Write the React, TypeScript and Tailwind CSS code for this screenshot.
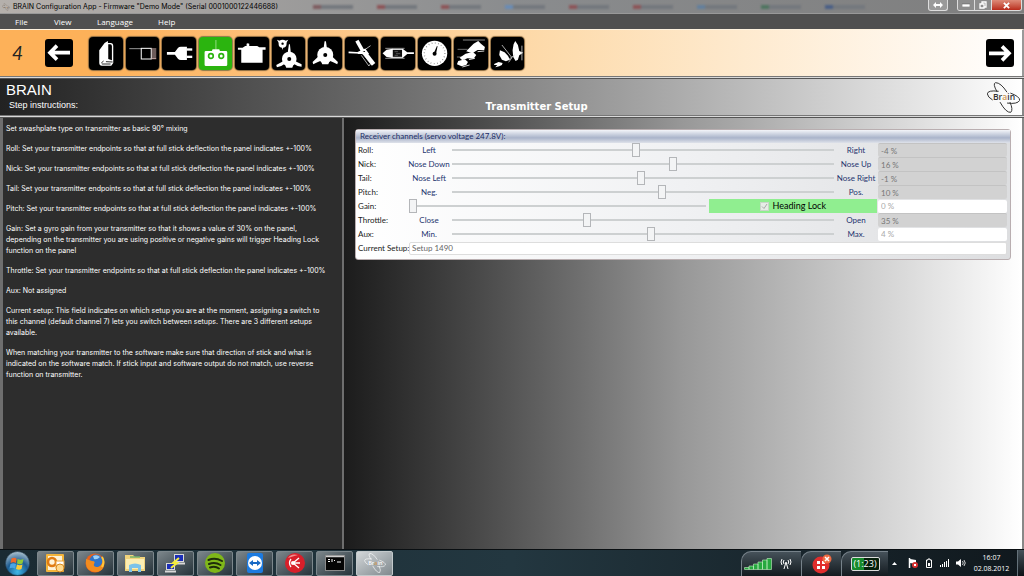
import React, { useState } from "react";

type Channel = {
  name: string;
  low?: string;
  high?: string;
  min: number;
  value: number;
  bright?: boolean;
};

const channels: Channel[] = [
  { name: "Roll", low: "Left", high: "Right", min: -100, value: -4 },
  { name: "Nick", low: "Nose Down", high: "Nose Up", min: -100, value: 16 },
  { name: "Tail", low: "Nose Left", high: "Nose Right", min: -100, value: -1 },
  { name: "Pitch", low: "Neg.", high: "Pos.", min: -100, value: 10 },
  { name: "Gain", min: 0, value: 0, bright: true },
  { name: "Throttle", low: "Close", high: "Open", min: 0, value: 35 },
  { name: "Aux", low: "Min.", high: "Max.", min: -100, value: 4, bright: true },
];

const instructions = [
  "Set swashplate type on transmitter as basic 90° mixing",
  "Roll: Set your transmitter endpoints so that at full stick deflection the panel indicates +-100%",
  "Nick: Set your transmitter endpoints so that at full stick deflection the panel indicates +-100%",
  "Tail: Set your transmitter endpoints so that at full stick deflection the panel indicates +-100%",
  "Pitch: Set your transmitter endpoints so that at full stick deflection the panel indicates +-100%",
  "Gain: Set a gyro gain from your transmitter so that it shows a value of 30% on the panel,\ndepending on the transmitter you are using positive or negative gains will trigger Heading Lock\nfunction on the panel",
  "Throttle: Set your transmitter endpoints so that at full stick deflection the panel indicates +-100%",
  "Aux: Not assigned",
  "Current setup: This field indicates on which setup you are at the moment, assigning a switch to\nthis channel (default channel 7) lets you switch between setups. There are 3 different setups\navailable.",
  "When matching your transmitter to the software make sure that direction of stick and what is\nindicated on the software match. If stick input and software output do not match, use reverse\nfunction on transmitter.",
];

const W = "#ffffff";
const K = "#000000";

const steps: { label: string; icon: React.ReactNode }[] = [
  {
    label: "Manual",
    icon: (
      <g>
        <path d="M30 77V40L46 18L56 12V18H64Q72 18 72 27V78L66 86H38Q30 86 30 77Z" fill={W} />
        <path d="M57 22H63Q68 22 68 28V70L57 66Z" fill={K} />
        <path d="M43 72L36 78M50 74L70 75M38 81H64" stroke={K} strokeWidth="2.5" fill="none" />
      </g>
    ),
  },
  {
    label: "Connection",
    icon: (
      <g fill="none">
        <path d="M9 35H45" stroke="#b5b5b5" strokeWidth="2.5" />
        <rect x="45" y="34" width="30" height="32" stroke={W} strokeWidth="3" />
        <path d="M76 36H90M76 42H90M76 48H90M76 54H90M76 60H90M76 65H90" stroke="#d8b8b4" strokeWidth="3" />
      </g>
    ),
  },
  {
    label: "Power",
    icon: (
      <g fill={W}>
        <path d="M14 45H38L47 33Q50 29 56 29H74V69H56Q50 69 47 65L38 53H14Z" />
        <rect x="73" y="34" width="17" height="7" />
        <rect x="73" y="56" width="17" height="7" />
      </g>
    ),
  },
  {
    label: "Transmitter",
    icon: (
      <g>
        <path d="M50 9V38" stroke="#c9f2bd" strokeWidth="2" />
        <path d="M38 42L40 37H60L62 42H80Q84 42 84 46V83Q84 87 80 87H20Q16 87 16 83V46Q16 42 20 42Z" fill={W} />
        <circle cx="35" cy="57" r="7" fill={W} stroke="#2bb40f" strokeWidth="5" />
        <circle cx="66" cy="57" r="7" fill={W} stroke="#2bb40f" strokeWidth="5" />
      </g>
    ),
  },
  {
    label: "Servo",
    icon: (
      <g fill={W}>
        <path d="M8 32H22L30 27H34V20Q37 17 42 20V27H66L72 31H91V38H82V77H18V38H8Z" />
      </g>
    ),
  },
  {
    label: "Swashplate type",
    icon: (
      <g fill={W}>
        <circle cx="31" cy="20" r="12" />
        <path d="M14 8L24 12L20 18ZM48 8L38 12L42 18ZM28 28H34L31 39Z" />
        <circle cx="31" cy="20" r="3.5" fill={K} />
        <circle cx="51" cy="66" r="22" />
        <path d="M46 50L50 22H53L56 50ZM34 72L12 84L14 91L27 87L38 80ZM68 72L88 82V89L76 87L64 80ZM36 78H66L60 92H42Z" />
        <circle cx="51" cy="66" r="6" fill={K} />
      </g>
    ),
  },
  {
    label: "Swashplate",
    icon: (
      <g fill={W}>
        <circle cx="51" cy="54" r="24" />
        <path d="M46 34L49 13H53L56 34ZM31 58L13 75L15 82L24 77L36 72ZM71 58L89 75L87 82L78 77L66 72ZM36 68H66L60 82H42Z" />
        <circle cx="51" cy="54" r="6" fill={K} />
      </g>
    ),
  },
  {
    label: "Main rotor",
    icon: (
      <g stroke={W} fill="none">
        <path d="M35 11L53 43" strokeWidth="11" />
        <path d="M57 46L85 82" strokeWidth="13" />
        <path d="M10 46L46 48" strokeWidth="5" />
        <path d="M38 48H66L59 38Z" strokeWidth="6" />
        <path d="M56 40L76 26M58 54L43 46M48 55L71 87L76 80L54 52" strokeWidth="2" />
      </g>
    ),
  },
  {
    label: "Tail rotor",
    icon: (
      <g>
        <path d="M4 49L16 38L34 35V63L16 60Z" fill={W} />
        <rect x="33" y="37" width="31" height="24" fill="#111" stroke={W} strokeWidth="3" />
        <path d="M64 35L78 46H98V51H78L64 63Z" fill={W} />
        <path d="M12 34H70M12 64H70" stroke="#ddd" strokeWidth="2" />
        <path d="M40 44H50M44 50H57M40 55H50" stroke="#777" strokeWidth="2" />
      </g>
    ),
  },
  {
    label: "Gyro",
    icon: (
      <g>
        <circle cx="49" cy="49" r="38" fill={W} />
        <circle cx="49" cy="49" r="31" fill="none" stroke="#777" strokeWidth="4" strokeDasharray="2 7.740" />
        <path d="M46 50L56 27L58 28L53 52Z" fill={K} />
        <circle cx="49" cy="50" r="6" fill={K} />
      </g>
    ),
  },
  {
    label: "Flight style",
    icon: (
      <g fill={W}>
        <path d="M26 9H92" stroke="#ccc" strokeWidth="2" />
        <path d="M58 20L72 12L80 20L92 30L90 39H70L54 49L36 43L46 32Z" />
        <path d="M10 37H40M8 60H30" stroke="#aaa" strokeWidth="2" />
        <path d="M34 50L56 45L66 54L58 65L40 64L24 70L16 62Z" />
        <path d="M12 72L32 67L41 75L36 84L22 88L8 82Z" />
        <path d="M24 90L46 84M44 68L62 64M70 44L90 42" stroke={W} strokeWidth="2.5" />
      </g>
    ),
  },
  {
    label: "Governor",
    icon: (
      <g fill={W}>
        <path d="M72 12L80 24L84 42L96 47L84 55L80 68L73 72L66 60L64 40L67 22Z" />
        <path d="M26 40L40 46L50 56L56 68L44 73L32 68L24 54Z" />
        <path d="M10 80L22 75L34 78L32 84L24 88L12 91L18 84L8 84Z" />
        <path d="M32 24L62 62M54 66L70 54M52 76L62 62M92 26V70" stroke="#ccc" strokeWidth="2.5" />
      </g>
    ),
  },
];

const BrainMark = ({ ink, className }: { ink: string; className: string }) => (
  <svg viewBox="0 0 100 94" className={className} aria-hidden="true">
    <g fill="none" stroke={ink} strokeWidth="3" strokeLinecap="round">
      <path d="M30 29Q16 4 26 2Q42 2 60 30" />
      <path d="M40 62Q58 94 72 92Q80 84 70 62" />
      <path d="M34 28Q2 24 1 36Q2 46 16 54" />
      <path d="M72 34Q100 44 99 56Q92 68 62 64" />
    </g>
    <text x="18" y="55" fontSize="26" fontFamily="Open Sans, sans-serif" fontWeight="600" fill={ink}>
      Br<tspan fill="#cf9a58">a</tspan>in
    </text>
  </svg>
);

const ArrowButton = ({ label, flip }: { label: string; flip?: boolean }) => (
  <button aria-label={label} className="size-7 shrink-0 rounded-[3px] bg-black">
    <svg viewBox="0 0 84 84" className={flip ? "size-7 rotate-180" : "size-7"}>
      <path d="M75 41H18M36 20L15 41L36 62" stroke={W} strokeWidth="11" fill="none" />
    </svg>
  </button>
);

const taskIcons: { label: string; icon: React.ReactNode }[] = [
  {
    label: "Outlook",
    icon: (
      <g>
        <rect x="1" y="1" width="18" height="18" rx="1" fill="#f3b43a" />
        <rect x="3" y="3" width="14" height="14" fill="#fff3d6" />
        <circle cx="7" cy="9" r="4" fill="none" stroke="#e07b12" strokeWidth="2.6" />
        <rect x="11" y="8" width="8" height="6" fill="#fff" stroke="#e9a23b" />
        <circle cx="15" cy="15" r="4" fill="#ffd98c" stroke="#d98a1c" />
      </g>
    ),
  },
  {
    label: "Firefox",
    icon: (
      <g>
        <circle cx="10" cy="10" r="9.5" fill="#e8621a" />
        <circle cx="11" cy="8" r="6.5" fill="#2f74c8" />
        <path d="M8 3Q12 1 15 4Q12 7 9 6Z" fill="#9fd0f4" />
        <path d="M1 6Q4 7 7 8Q11 8 9 11Q8 14 13 14Q17 13 18 8Q21 17 12 19Q2 19 1 11Z" fill="#f28c1e" />
        <path d="M17 4Q20 9 17 14" stroke="#ffc83a" strokeWidth="2" fill="none" />
      </g>
    ),
  },
  {
    label: "Explorer",
    icon: (
      <g>
        <path d="M0 2H8L10 4H20V18H0Z" fill="#f0d37c" />
        <path d="M1 6H19V16H1Z" fill="#fbeeb4" />
        <path d="M4 12Q10 9 16 12V19H13V15H7V19H4Z" fill="#7cc3ea" />
        <path d="M5 4H15" stroke="#73b36b" strokeWidth="1.5" />
      </g>
    ),
  },
  {
    label: "PuTTY",
    icon: (
      <g stroke="#d8d8d8">
        <rect x="9.500" y="1.500" width="9" height="7" fill="#1b2fb8" />
        <path d="M9 10.500H20" strokeWidth="2" />
        <rect x="1.500" y="10.500" width="8" height="6" fill="#1b2fb8" />
        <path d="M0 18.500H11" strokeWidth="2" />
        <path d="M14 5L8 10H12L6 15" stroke="#f5ec3d" strokeWidth="2" fill="none" />
      </g>
    ),
  },
  {
    label: "Spotify",
    icon: (
      <g>
        <circle cx="10" cy="10" r="10" fill="#7fb719" />
        <path d="M3.500 7Q10 4 17 8M4 11Q10 8.500 15.500 12M5 14.500Q10 12.500 14 15.500" stroke="#1f2d0a" strokeWidth="2" fill="none" strokeLinecap="round" />
      </g>
    ),
  },
  {
    label: "TeamViewer",
    icon: (
      <g>
        <rect x="2" y="0" width="16" height="20" rx="2" fill="#1c7be0" />
        <circle cx="10" cy="10" r="7" fill="#fff" />
        <path d="M4 10L8 7V9H12V7L16 10L12 13V11H8V13Z" fill="#1769c4" />
      </g>
    ),
  },
  {
    label: "Network",
    icon: (
      <g>
        <circle cx="10" cy="10" r="10" fill="#d81f2a" />
        <path d="M3 5Q6 0 13 2Q9 3 3 5Z" fill="#f28d8d" />
        <circle cx="8" cy="10" r="2" fill="#fff" />
        <path d="M8 10L14 5M8 10H15M8 10L14 15M6 6Q3 10 6 14" stroke="#fff" strokeWidth="1.300" fill="none" />
      </g>
    ),
  },
  {
    label: "Command prompt",
    icon: (
      <g>
        <rect x="0.500" y="2.500" width="19" height="15" fill="#050505" stroke="#8b8b8b" />
        <path d="M1 3.500H19" stroke="#cfcfcf" strokeWidth="1.500" />
        <path d="M3 6.500H5M3 8.500H5M7 6V9M9 7.500H10M12 9H16" stroke="#fff" />
      </g>
    ),
  },
];

const Rule = () => <div className="h-[3px] shrink-0 border-y border-t-[#777] border-b-[#555] bg-[#d9d9d9]" />;

const trackStyle =
  "m-0 h-[14px] min-w-0 flex-1 appearance-none bg-transparent [&::-webkit-slider-runnable-track]:h-[2px] [&::-webkit-slider-runnable-track]:bg-[#cdd0d1] [&::-webkit-slider-thumb]:mt-[-6px] [&::-webkit-slider-thumb]:h-[14px] [&::-webkit-slider-thumb]:w-[8px] [&::-webkit-slider-thumb]:appearance-none [&::-webkit-slider-thumb]:border [&::-webkit-slider-thumb]:border-[#b4b6b9] [&::-webkit-slider-thumb]:bg-[#f3f4f5]";

function ChannelRow({ channel }: { channel: Channel }) {
  const [value, setValue] = useState(channel.value);
  const id = "channel-" + channel.name.toLowerCase();
  const slider = (
    <input
      id={id}
      type="range"
      min={channel.min}
      max={100}
      value={value}
      onChange={(e) => setValue(Number(e.target.value))}
      className={trackStyle}
    />
  );
  return (
    <div className="grid h-[14px] grid-cols-[51px_40px_minmax(0,1fr)_44px_129px] items-center">
      <label htmlFor={id} className="text-[#222]">
        {channel.name}:
      </label>
      {channel.low ? (
        <>
          <span className="flex justify-center whitespace-nowrap text-[#25356f]">{channel.low}</span>
          <div className="flex pl-[3px]">{slider}</div>
          <span className="flex justify-center whitespace-nowrap text-[#25356f]">{channel.high}</span>
        </>
      ) : (
        <div className="col-span-3 flex h-[14px] gap-[3px] pr-px">
          {slider}
          <label className="flex w-[36%] items-center justify-center gap-1 bg-[#90ee90] text-[9px] text-black">
            <span className="relative flex">
              <input
                type="checkbox"
                checked
                disabled
                readOnly
                className="size-[9px] appearance-none border border-[#c9d6c9] bg-[#e6ede6]"
              />
              <svg viewBox="0 0 9 9" className="absolute inset-0 size-[9px]" aria-hidden="true">
                <path d="M2 4.500L4 6.500L7 2" stroke="#aaa" fill="none" />
              </svg>
            </span>
            Heading Lock
          </label>
        </div>
      )}
      <input
        readOnly
        aria-label={channel.name + " value"}
        value={value + " %"}
        className={
          channel.bright
            ? "h-[13px] w-full min-w-0 rounded-[2px] bg-white px-[3px] text-[#aaa]"
            : "h-[14px] w-full min-w-0 rounded-[2px] border-t border-[#c3c3c3] bg-[#d2d2d2] px-[3px] text-[#777]"
        }
      />
    </div>
  );
}

export default function App() {
  const [active, setActive] = useState(3);
  return (
    <div className="flex min-h-screen flex-col bg-[#2d2d2d] font-['Open_Sans','Noto_Sans',sans-serif] text-[7px]">
      <header className="flex h-[14px] shrink-0 items-center border-b border-[#999] bg-linear-to-r from-[#b5b0ac] via-[#8a8c8e] to-[#7e7e7e] pl-[2px] text-black">
        <BrainMark ink="#6d6257" className="mr-[3px] h-2 w-2 shrink-0" />
        <h1 className="w-[300px] shrink-0 font-['Inter',sans-serif] text-[7px] leading-[13px] whitespace-nowrap">
          BRAIN Configuration App - Firmware "Demo Mode" (Serial 0001000122446688)
        </h1>
        <div aria-hidden="true" className="flex min-w-0 flex-1 gap-6 overflow-hidden blur-[1px]">
          <i className="h-1 w-10 border-l-8 border-[#7f5d60] bg-[#74787e]" />
          <i className="h-1 w-10 border-l-8 border-[#8d5558] bg-[#74787e]" />
          <i className="h-1 w-10 border-l-8 border-[#8d5558] bg-[#74787e]" />
          <i className="h-1 w-10 border-l-8 border-[#6a8cb5] bg-[#74787e]" />
          <i className="h-1 w-10 border-l-8 border-[#8d5558] bg-[#74787e]" />
          <i className="h-1 w-10 border-l-8 border-[#8d5558] bg-[#74787e]" />
          <i className="h-1 w-10 border-l-8 border-[#63809d] bg-[#74787e]" />
          <i className="h-1 w-10 border-l-8 border-[#4f7560] bg-[#74787e]" />
          <i className="h-1 w-10 border-l-8 border-[#4a5f86] bg-[#74787e]" />
        </div>
        <button aria-label="Move" className="mr-[9px] flex h-[11px] w-5 shrink-0 items-center justify-center self-start rounded-b-[3px] border border-t-0 border-[#ddd] bg-[#9a9a9a]">
          <svg viewBox="0 0 10 6" className="h-[6px] w-[10px]"><path d="M0 3L3 0V2H7V0L10 3L7 6V4H3V6Z" fill={W} /></svg>
        </button>
        <div className="mr-[2px] flex h-[11px] shrink-0 self-start overflow-hidden rounded-b-[3px] border border-t-0 border-[#ddd]">
          <button aria-label="Minimize" className="flex w-[17px] items-center justify-center border-r border-[#ddd] bg-[#8e8e8e]">
            <svg viewBox="0 0 8 4" className="h-1 w-2"><rect width="8" height="3" y="1" fill={W} stroke="#555" strokeWidth=".5" /></svg>
          </button>
          <button aria-label="Restore" className="flex w-[17px] items-center justify-center border-r border-[#ddd] bg-[#8e8e8e]">
            <svg viewBox="0 0 8 8" className="size-2"><path d="M3 3V1H7V6H5M1 3H5V7H1Z" stroke={W} fill="none" strokeWidth="1.3" /></svg>
          </button>
          <button aria-label="Close" className="flex w-[29px] items-center justify-center bg-linear-to-b from-[#dd8a78] to-[#b8291a]">
            <svg viewBox="0 0 8 8" className="size-[7px]"><path d="M1 1L7 7M7 1L1 7" stroke={W} strokeWidth="2" /></svg>
          </button>
        </div>
      </header>

      <nav className="flex h-[15px] shrink-0 items-center bg-[#505050] pl-[15px] text-[8px] text-white">
        <button className="w-[39px] text-left">File</button>
        <button className="w-[43px] text-left">View</button>
        <button className="w-[61px] text-left">Language</button>
        <button className="text-left">Help</button>
      </nav>

      <div className="flex h-[47px] shrink-0 items-center border-t border-r-2 border-[#fff3e0] border-r-[#999] bg-linear-to-r from-[#fdb159] from-10% via-[#fddcae] via-55% to-white pr-2">
        <span className="w-[45px] pl-3 font-['Lato',sans-serif] text-[19px] text-[#222] italic">4</span>
        <ArrowButton label="Previous step" />
        <div className="ml-4 grid w-[435px] grid-cols-12 gap-[3px]">
          {steps.map((step, i) => (
            <button
              key={step.label}
              aria-label={step.label}
              onClick={() => setActive(i)}
              className={
                i === active
                  ? "h-[33px] rounded-[4px] bg-[#2bb40f] shadow-[0_0_1px_1px_#8a7a4a]"
                  : "h-[33px] rounded-[4px] bg-black shadow-[0_0_1px_1px_#8a6a40]"
              }
            >
              <svg viewBox="0 0 99 99" className="h-[33px] w-full">{step.icon}</svg>
            </button>
          ))}
        </div>
        <div className="flex-1" />
        <ArrowButton label="Next step" flip />
      </div>
      <Rule />

      <div className="flex h-9 shrink-0 items-center border-r-2 border-[#888] bg-linear-to-r from-[#222] via-[#8a8a8a] via-52% to-white pr-[2px] font-['Liberation_Sans',sans-serif] text-white">
        <div className="w-[47.6%] pl-[6px]">
          <div className="text-[15px] leading-[16px]">BRAIN</div>
          <div className="pl-[3px] text-[9px] leading-[14px]">Step instructions:</div>
        </div>
        <h2 className="self-end font-['DejaVu_Sans',sans-serif] text-[10px] leading-[16px] font-bold">Transmitter Setup</h2>
        <div className="flex flex-1 justify-end">
          <BrainMark ink="#333" className="h-[31px] w-[33px]" />
        </div>
      </div>
      <Rule />

      <main className="flex flex-1">
        <section className="w-[33.6%] shrink-0 border-r-2 border-l-[3px] border-[#6e6e6e] bg-[#2d2d2d] pt-[5px] pl-[3px] font-['Inter',sans-serif] text-[7px] leading-[11px] text-white">
          {instructions.map((text) => (
            <p key={text} className="mb-[9px] whitespace-pre-line">
              {text}
            </p>
          ))}
        </section>
        <section className="flex-1 border-r-2 border-[#888] bg-linear-to-r from-[#1c1c1c] via-[#989898] via-50% to-white pt-[11px] pr-[11px] pl-[11px]">
          <fieldset className="rounded-[3px] border border-[#b9aeb0] bg-linear-to-r from-white via-[#f0f1f3] to-[#dddee0] font-['Lato',sans-serif] text-[8px] leading-[12px]">
            <h3 className="h-[13px] bg-linear-to-b from-[#f3f5f9] via-[#aab4ca] via-60% to-[#dfe2ea] pl-1 text-[#222e66]">
              Receiver channels (servo voltage 247.8V):
            </h3>
            <div className="pr-[3px] pb-1 pl-[2px]">
              {channels.map((c) => (
                <ChannelRow key={c.name} channel={c} />
              ))}
              <div className="flex h-[14px] items-center">
                <label htmlFor="current-setup" className="w-[51px] shrink-0 whitespace-nowrap text-[#222]">
                  Current Setup:
                </label>
                <input
                  id="current-setup"
                  readOnly
                  value="Setup 1490"
                  className="h-[13px] min-w-0 flex-1 rounded-[2px] border border-[#ddd] bg-white px-[2px] text-[#666]"
                />
              </div>
            </div>
          </fieldset>
        </section>
      </main>

      <footer className="flex h-[27px] shrink-0 items-center border-t border-[#0a0f12] bg-linear-to-r from-[#1a2b33] via-[#233740] via-50% to-[#10181d] text-white">
        <button aria-label="Start" className="ml-[5px] size-[25px] shrink-0">
          <svg viewBox="0 0 50 50" className="size-[25px]">
            <defs>
              <radialGradient id="orb" cx=".5" cy=".85" r=".8">
                <stop offset="0" stopColor="#3fb8e8" />
                <stop offset=".55" stopColor="#1d5c92" />
                <stop offset="1" stopColor="#9fb8c8" />
              </radialGradient>
            </defs>
            <circle cx="25" cy="25" r="24" fill="url(#orb)" stroke="#1a3448" />
            <path d="M13 15Q18 12 23 15L22 24Q17 21 11 24Z" fill="#ee6a2b" />
            <path d="M25 16Q31 19 37 16L35 25Q30 28 24 25Z" fill="#8fc93a" />
            <path d="M11 26Q16 23 22 26L20 35Q15 32 9 35Z" fill="#4aa5e6" />
            <path d="M24 27Q29 30 35 27L33 36Q28 39 22 36Z" fill="#fccb35" />
          </svg>
        </button>
        <div className="ml-[7px] grid w-[356px] grid-cols-9 gap-[3px]">
          {taskIcons.map((task) => (
            <button
              key={task.label}
              aria-label={task.label}
              className="flex h-[25px] items-center justify-center rounded-[2px] border border-[#7c878c] bg-linear-to-br from-[#7c868b] to-[#27343b]"
            >
              <svg viewBox="0 0 20 20" className="size-5">{task.icon}</svg>
            </button>
          ))}
          <button aria-label="BRAIN Configuration App" className="flex h-[25px] items-center justify-center rounded-[2px] border border-[#c3c9cb] bg-linear-to-br from-[#d3d7d9] to-[#80898e]">
            <BrainMark ink="#ffffff" className="h-5 w-[22px]" />
          </button>
        </div>
        <div className="flex-1" />
        <div className="flex h-[25px] w-[60px] items-center gap-2 rounded-tl-[10px] border-t border-l border-[#77828a] bg-linear-to-b from-[#46525a] to-[#141b20] pl-[2px]">
          <svg viewBox="0 0 28 12" className="h-3 w-7" fill="#27a83f" stroke="#c5eec5" strokeWidth=".6">
            <path d="M.5 9.500H5V11.500H.5ZM5 8H9.500V11.500H5ZM9.500 6H14V11.500H9.500ZM14 4H18.500V11.500H14ZM18.500 2H23V11.500H18.500ZM23 .5H27.500V11.500H23Z" />
          </svg>
          <svg viewBox="0 0 12 12" className="size-3" stroke={W} fill="none">
            <path d="M6 4L4 11M6 4L8 11M4 2Q2.500 4 4 6M8 2Q9.500 4 8 6M2 1Q0 4 2 7M10 1Q12 4 10 7" />
          </svg>
        </div>
        <div className="flex h-[25px] w-10 items-center justify-center rounded-tl-[10px] border-t border-l border-[#77828a] bg-linear-to-b from-[#46525a] to-[#141b20]">
          <svg viewBox="0 0 20 20" className="size-5">
            <circle cx="9" cy="11" r="8.500" fill="#e12d2d" />
            <path d="M5 7H8V10H5ZM10 7H13V10H10ZM5 12H8V15H5ZM10 12H13V15H10Z" fill={W} />
            <circle cx="15" cy="5" r="4.500" fill="#ef6b42" />
            <path d="M13 3L17 7M17 3L13 7" stroke={W} strokeWidth="1.500" />
          </svg>
        </div>
        <div className="flex h-[25px] w-[47px] items-center justify-center rounded-tl-[10px] border-t border-l border-[#77828a] bg-linear-to-b from-[#46525a] to-[#141b20]">
          <div className="h-[14px] w-[29px] rounded-[2px] border border-[#ddd] bg-linear-to-r from-[#178a2c] from-45% to-[#06200b] to-45% text-center text-[9px] leading-[12px]">(1:23)</div>
        </div>
        <div className="flex items-center gap-[7px] pl-1">
          <svg viewBox="0 0 5 3" className="h-[3px] w-[5px]"><path d="M0 3L2.500 0L5 3Z" fill={W} /></svg>
          <svg viewBox="0 0 10 10" className="ml-1 size-[10px]">
            <path d="M1.500 0V10" stroke={W} strokeWidth="1.500" />
            <path d="M2 1L8 2V6L2 5Z" fill={W} />
            <circle cx="7" cy="7" r="3" fill="#d62f2f" />
            <path d="M6 6L8 8M8 6L6 8" stroke={W} />
          </svg>
          <svg viewBox="0 0 8 10" className="h-[10px] w-2"><path d="M3 1H5V2H6.500V9.500H1.500V2H3Z" fill="none" stroke={W} /><rect x="3" y="5" width="2" height="3" fill={W} /></svg>
          <svg viewBox="0 0 9 8" className="h-2 w-[9px]" fill={W}><path d="M0 6H1V8H0ZM2 5H3V8H2ZM4 3H5V8H4ZM6 2H7V8H6ZM8 0H9V8H8Z" /></svg>
          <svg viewBox="0 0 10 8" className="h-2 w-[10px]"><path d="M0 2.500H2L5 0V8L2 5.500H0Z" fill={W} /><path d="M6.500 2Q8 4 6.500 6M8 1Q10.500 4 8 7" stroke={W} fill="none" strokeWidth=".8" /></svg>
        </div>
        <time className="w-[51px] text-center text-[7px] leading-[11px] whitespace-nowrap">
          16:07
          <br />
          02.08.2012
        </time>
        <button aria-label="Show desktop" className="h-full w-[7px] border-l border-[#65727a] bg-linear-to-b from-[#46525a] to-[#0d1317]" />
      </footer>
    </div>
  );
}
